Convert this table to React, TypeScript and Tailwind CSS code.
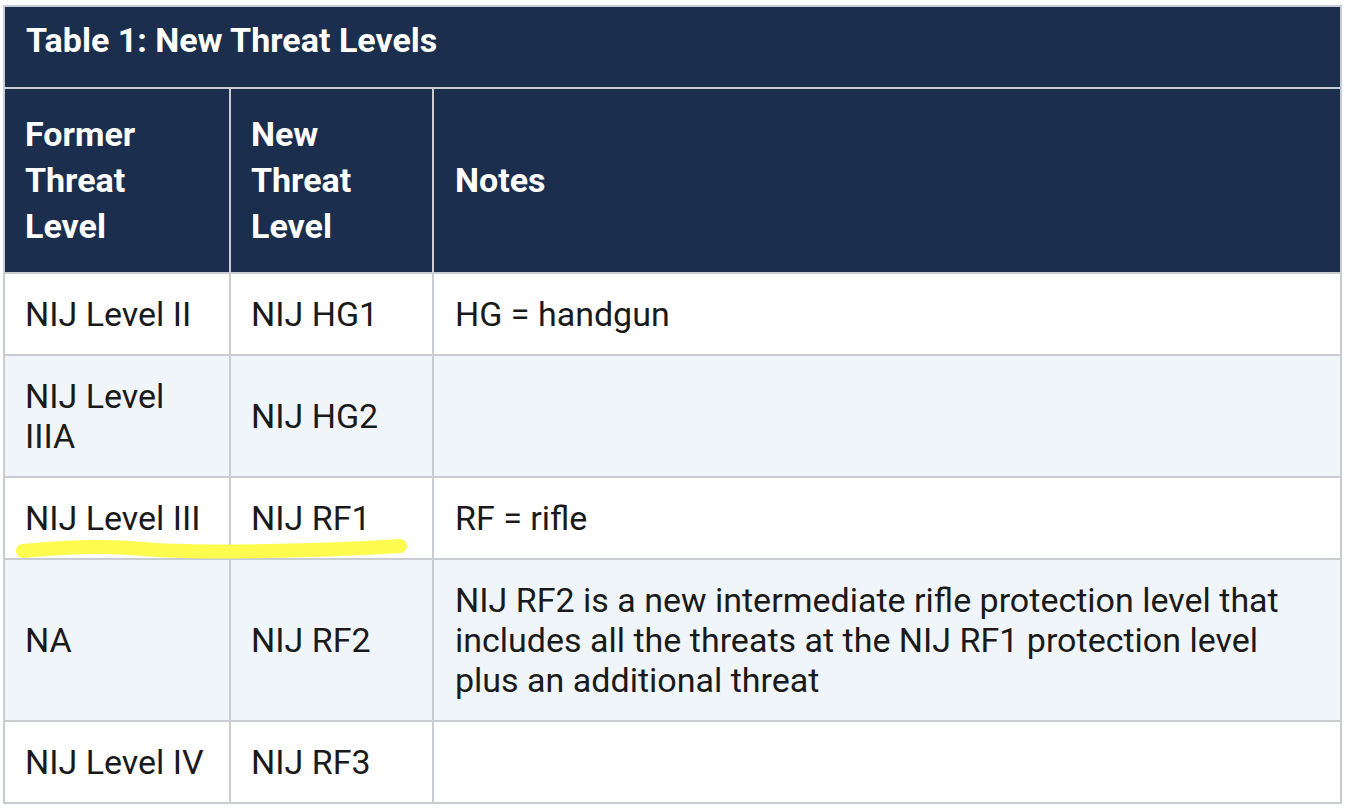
import React from 'react';

const rows = [
  { former: 'NIJ Level II', next: 'NIJ HG1', notes: 'HG = handgun' },
  { former: 'NIJ Level IIIA', next: 'NIJ HG2', notes: '' },
  { former: 'NIJ Level III', next: 'NIJ RF1', notes: 'RF = rifle' },
  {
    former: 'NA',
    next: 'NIJ RF2',
    notes:
      'NIJ RF2 is a new intermediate rifle protection level that includes all the threats at the NIJ RF1 protection level plus an additional threat',
  },
  { former: 'NIJ Level IV', next: 'NIJ RF3', notes: '' },
];

export default function App() {
  return (
    <div className="w-[1350px] h-[810px] bg-white pt-[5px] pl-[3px] font-['Roboto',sans-serif] text-[#1a1a1a]">
      <div className="relative w-[1339px]">
        <table className="w-full table-fixed border-collapse border-2 border-[#c9ccd1]">
          <colgroup>
            <col className="w-[226px]" />
            <col className="w-[203px]" />
            <col />
          </colgroup>
          <thead>
            <tr>
              <th
                colSpan={3}
                className="bg-[#1b2e4d] border-2 border-[#c9ccd1] text-left text-white font-bold text-[34px] leading-10 pl-[21px] pt-[13px] pb-[27px]"
              >
                Table 1: New Threat Levels
              </th>
            </tr>
            <tr className="bg-[#1b2e4d] text-white text-left font-bold text-[34px] leading-[46px]">
              <th className="border-2 border-[#c9ccd1] px-[20px] pt-[22px] pb-[23px] text-left align-middle">
                Former
                <br />
                Threat
                <br />
                Level
              </th>
              <th className="border-2 border-[#c9ccd1] px-[20px] pt-[22px] pb-[23px] text-left align-middle">
                New
                <br />
                Threat
                <br />
                Level
              </th>
              <th className="border-2 border-[#c9ccd1] px-[21px] pt-[22px] pb-[23px] text-left align-middle">
                Notes
              </th>
            </tr>
          </thead>
          <tbody className="text-[34px] leading-10">
            {rows.map((r, i) => (
              <tr key={i} className={i % 2 === 1 ? 'bg-[#f0f5f9]' : 'bg-white'}>
                <td className="border-2 border-[#c9ccd1] px-[20px] py-5 align-middle">
                  {r.former === 'NIJ Level IIIA' ? (
                    <>
                      NIJ Level
                      <br />
                      IIIA
                    </>
                  ) : (
                    r.former
                  )}
                </td>
                <td className="border-2 border-[#c9ccd1] px-[20px] py-5 align-middle">{r.next}</td>
                <td className="border-2 border-[#c9ccd1] px-[21px] py-5 align-middle">{r.notes}</td>
              </tr>
            ))}
          </tbody>
        </table>

        {/* highlighter stroke under row 3 */}
        <svg
          className="absolute left-0 top-0 pointer-events-none"
          width="420"
          height="580"
          viewBox="0 0 420 580"
        >
          <path
            d="M20 546 C 60 542, 100 540, 140 544 S 300 547, 397 541"
            fill="none"
            stroke="#fcfb4e"
            strokeWidth="14"
            strokeLinecap="round"
          />
        </svg>
      </div>
    </div>
  );
}
